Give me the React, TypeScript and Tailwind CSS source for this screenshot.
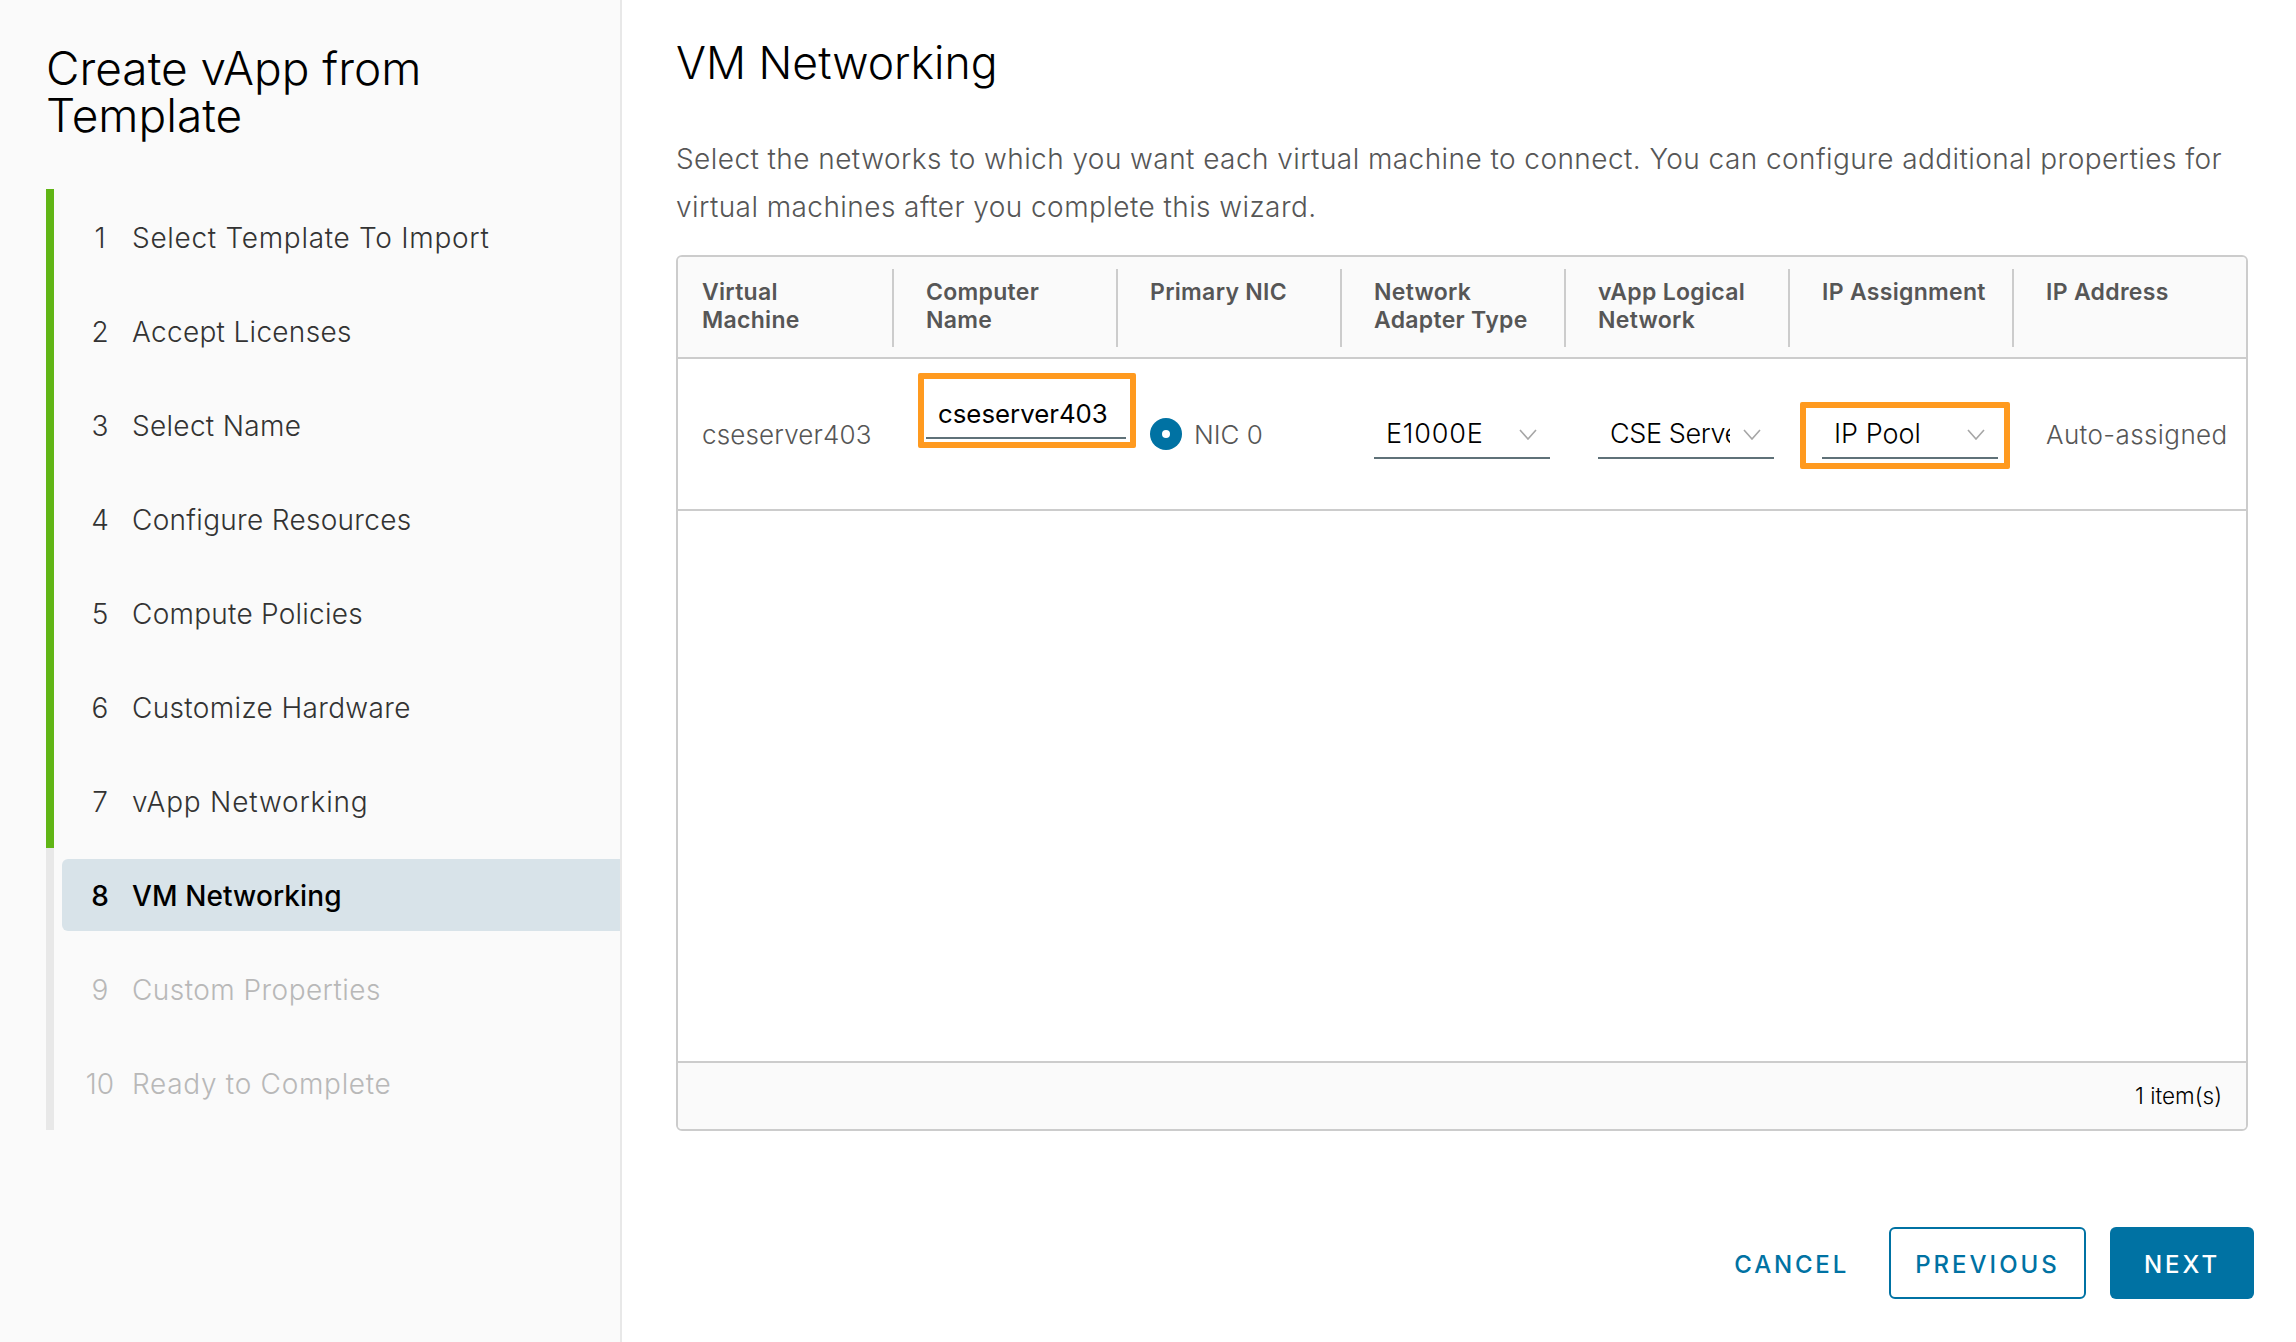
const steps = [
  { label: "Select Template To Import", spacing: "tracking-[0.7px]" },
  { label: "Accept Licenses", spacing: "tracking-[0.3px]" },
  { label: "Select Name", spacing: "tracking-[0.3px]" },
  { label: "Configure Resources", spacing: "tracking-[0.3px]" },
  { label: "Compute Policies", spacing: "tracking-[0.25px]" },
  { label: "Customize Hardware", spacing: "tracking-[0.35px]" },
  { label: "vApp Networking", spacing: "tracking-[0.8px]" },
  { label: "VM Networking", spacing: "tracking-[0.1px]" },
  { label: "Custom Properties", spacing: "tracking-[0.45px]" },
  { label: "Ready to Complete", spacing: "tracking-[0.7px]" },
];

const columns = [
  ["Virtual", "Machine"],
  ["Computer", "Name"],
  ["Primary NIC"],
  ["Network", "Adapter Type"],
  ["vApp Logical", "Network"],
  ["IP Assignment"],
  ["IP Address"],
];

function Chevron() {
  return (
    <svg width="18" height="11" viewBox="0 0 18 11" fill="none" className="shrink-0">
      <path d="M1 1l8 9 8-9" stroke="#a6a6a6" strokeWidth="1.6" />
    </svg>
  );
}

function Select({ value, textClass }: { value: string; textClass: string }) {
  return (
    <div className="relative flex h-[50px] w-[176px] items-center border-b-2 border-[#5f7178] pt-[2px] pl-3 pr-[13px] text-[27px] text-black">
      <div className={`w-[120px] overflow-hidden whitespace-nowrap ${textClass}`}>{value}</div>
      <div className="ml-auto">
        <Chevron />
      </div>
    </div>
  );
}

function Highlight({ className }: { className: string }) {
  return <div className={`pointer-events-none absolute rounded-[2px] border-[6px] border-[#ff9a1f] ${className}`} />;
}

export default function App() {
  return (
    <div className="flex h-[1342px] w-[2296px] overflow-hidden bg-white font-['Inter',sans-serif]">
      <aside className="h-full w-[622px] shrink-0 border-r-2 border-[#e8e8e8] bg-[#fafafa] pt-[45px]">
        <h1 className="pl-[46px] text-[46px] font-light leading-[47px] text-black">
          Create vApp from
          <br />
          Template
        </h1>
        <ul className="mt-[50px] ml-[46px]">
          {steps.map(({ label, spacing }, i) => {
            const n = i + 1;
            const active = n === 8;
            const done = n < 8;
            return (
              <li
                key={label}
                className={`${i === 0 ? "h-[95px] pt-[12px] pb-[11px]" : "h-[94px] py-[11px]"} border-l-8 pl-2 ${
                  done ? "border-[#60b515]" : "border-[#e8e8e8]"
                }`}
              >
                <div
                  className={`flex h-[72px] items-center rounded-l-[6px] pt-[2px] pl-2 text-[28px] ${
                    active
                      ? "bg-[#d8e3e9] font-medium text-black"
                      : done
                        ? "font-light text-[#333333]"
                        : "font-light text-[#b8b8b8]"
                  }`}
                >
                  <span className="w-[60px] text-center">{n}</span>
                  <span className={`ml-[2px] ${spacing}`}>{label}</span>
                </div>
              </li>
            );
          })}
        </ul>
      </aside>

      <main className="flex min-w-0 flex-1 flex-col pt-[39px] pr-[42px] pl-[54px]">
        <h2 className="text-[44.5px] font-light leading-[48px] text-black">VM Networking</h2>
        <p className="mt-[48px] w-[1572px] whitespace-nowrap text-[28px] font-light leading-[48px] tracking-[0.43px] text-[#565656]">
          Select the networks to which you want each virtual machine to connect. You can configure additional properties for
          <br />
          virtual machines after you complete this wizard.
        </p>

        <div className="mt-[24px] flex h-[876px] w-[1572px] flex-col rounded-[6px] border-2 border-[#cccccc]">
          <div className="flex h-[102px] shrink-0 rounded-t-[4px] border-b-2 border-[#cccccc] bg-[#fafafa] pt-3">
            {columns.map((lines, i) => (
              <div key={lines[0]} className="w-[224px] pr-[8px]">
                <div
                  className={`h-[78px] pt-[9px] pl-6 text-[23px] font-semibold leading-[28px] tracking-[0.3px] text-[#565656] ${
                    i < 6 ? "border-r-2 border-[#cccccc]" : ""
                  }`}
                >
                  {lines.map((line) => (
                    <div key={line}>{line}</div>
                  ))}
                </div>
              </div>
            ))}
          </div>

          <div className="flex h-[152px] shrink-0 items-center border-b-2 border-[#cccccc] text-[26px] font-light text-[#565656]">
            <div className="w-[224px] pl-6 tracking-[0.15px]">cseserver403</div>
            <div className="relative flex h-full w-[224px] items-center pl-6">
              <div className="mb-[40px] flex h-[50px] w-[200px] items-center border-b-2 border-[#5f7178] pt-[2px] pl-3 text-[25.8px] font-normal text-black">
                cseserver403
              </div>
              <Highlight className="top-[14px] left-[16px] h-[75px] w-[218px]" />
            </div>
            <div className="flex w-[224px] items-center pl-6">
              <span className="flex h-8 w-8 items-center justify-center rounded-full bg-[#0072a3]">
                <span className="h-2 w-2 rounded-full bg-white" />
              </span>
              <span className="ml-[12px]">NIC 0</span>
            </div>
            <div className="w-[224px] pl-6">
              <Select value="E1000E" textClass="tracking-[0.8px]" />
            </div>
            <div className="w-[224px] pl-6">
              <Select value="CSE Server" textClass="tracking-[-0.4px]" />
            </div>
            <div className="relative flex h-full w-[224px] items-center pl-6">
              <Select value="IP Pool" textClass="tracking-[0px]" />
              <Highlight className="top-[43px] left-[2px] h-[67px] w-[210px]" />
            </div>
            <div className="w-[224px] pl-6 whitespace-nowrap tracking-[0.4px]">Auto-assigned</div>
          </div>

          <div className="flex-1" />

          <div className="flex h-[68px] shrink-0 items-center justify-end rounded-b-[4px] border-t-2 border-[#cccccc] bg-[#fafafa] pr-6 text-[22.5px] font-light text-black">
            1 item(s)
          </div>
        </div>

        <div className="mt-[96px] flex items-center justify-end">
          <button className="mr-[40px] pt-[4px] text-[24px] font-medium tracking-[2.8px] text-[#0072a3]">CANCEL</button>
          <button className="mr-6 h-[72px] w-[197px] rounded-[6px] border-2 border-[#0072a3] pt-[4px] text-[24px] font-medium tracking-[3px] text-[#0072a3]">
            PREVIOUS
          </button>
          <button className="h-[72px] w-[144px] rounded-[6px] bg-[#0072a3] pt-[4px] text-[24px] font-medium tracking-[3px] text-white">
            NEXT
          </button>
        </div>
      </main>
    </div>
  );
}
